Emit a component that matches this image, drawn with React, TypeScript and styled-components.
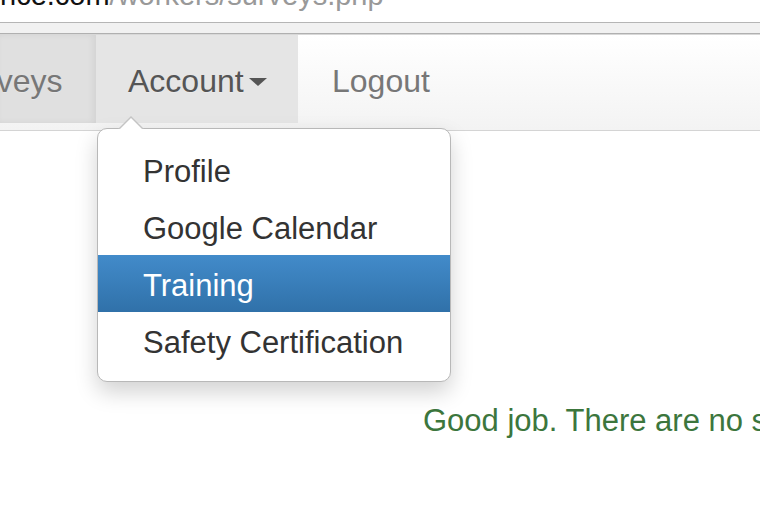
import React from "react";
import styled, { createGlobalStyle } from "styled-components";

const Global = createGlobalStyle`
  html, body {
    margin: 0;
    padding: 0;
    background: #fff;
    overflow: hidden;
  }
  body {
    font-family: "Liberation Sans", Arial, Helvetica, sans-serif;
  }
`;

const Page = styled.div`
  width: 760px;
  height: 514px;
  display: flex;
  flex-direction: column;
  overflow: hidden;
`;

const UrlBar = styled.div`
  height: 22px;
  overflow: hidden;
  border-bottom: 1px solid #b5b5b5;
  background: #fff;
`;

const UrlText = styled.div`
  font-size: 29px;
  line-height: 29px;
  margin-top: -19px;
  white-space: nowrap;
  color: #999;
  span {
    color: #111;
  }
`;

const ChromeStrip = styled.div`
  height: 10px;
  background: #f1f1f1;
  border-bottom: 1px solid #b0b0b0;
`;

const NavBar = styled.nav`
  position: relative;
  height: 95px;
  background: linear-gradient(to bottom, #ffffff 0%, #f3f3f3 100%);
  border-top: 1px solid #d8d8d8;
  border-bottom: 1px solid #d4d4d4;
  display: flex;
  align-items: flex-start;
`;

const NavItem = styled.div<{ $bg?: string; $color?: string; $w: number; $pad: number; $inset?: boolean }>`
  position: relative;
  width: ${(p) => p.$w}px;
  height: 88px;
  padding-top: 4px;
  background: ${(p) => p.$bg || "transparent"};
  box-shadow: ${(p) => (p.$inset ? "inset -3px 0 6px rgba(0,0,0,0.06)" : "none")};
  color: ${(p) => p.$color || "#777"};
  font-size: 32px;
  display: flex;
  align-items: center;
  padding-left: ${(p) => p.$pad}px;
  box-sizing: border-box;
  white-space: nowrap;
  overflow: hidden;
  text-shadow: 0 1px 0 rgba(255, 255, 255, 0.25);
`;

const Caret = styled.span`
  display: inline-block;
  width: 0;
  height: 0;
  margin-left: 5px;
  margin-top: 2px;
  border-top: 8px solid #555;
  border-left: 9px solid transparent;
  border-right: 9px solid transparent;
`;

const Dropdown = styled.div`
  position: absolute;
  left: 97px;
  top: 93px;
  width: 352px;
  padding: 12px 0;
  background: #fff;
  border: 1px solid #b8b8b8;
  border-radius: 10px;
  box-shadow: 0 10px 22px rgba(0, 0, 0, 0.18);
  z-index: 2;

  &::before,
  &::after {
    content: "";
    position: absolute;
    width: 0;
    height: 0;
    border-left: 13px solid transparent;
    border-right: 13px solid transparent;
  }
  &::before {
    left: 20px;
    top: -13px;
    border-bottom: 13px solid #c4c4c4;
  }
  &::after {
    left: 21px;
    top: -11px;
    border-left-width: 12px;
    border-right-width: 12px;
    border-bottom: 12px solid #fff;
  }
`;

const MenuItem = styled.div<{ $active?: boolean }>`
  height: 57px;
  padding-top: 4px;
  box-sizing: border-box;
  display: flex;
  align-items: center;
  padding-left: 45px;
  font-size: 31px;
  white-space: nowrap;
  color: ${(p) => (p.$active ? "#fff" : "#333")};
  background: ${(p) =>
    p.$active ? "linear-gradient(to bottom, #428bca 0%, #3071a9 100%)" : "transparent"};
`;

const Content = styled.div`
  flex: 1;
  padding: 272px 0 0 423px;
`;

const Success = styled.div`
  font-size: 31px;
  color: #3c763d;
  white-space: nowrap;
`;

export default function App() {
  const items = ["Profile", "Google Calendar", "Training", "Safety Certification"];
  return (
    <>
      <Global />
      <Page>
        <UrlBar>
          <UrlText>
            <span>nce.com</span>/workers/surveys.php
          </UrlText>
        </UrlBar>
        <ChromeStrip />
        <NavBar>
          <NavItem $w={96} $pad={0} $bg="#e0e0e0" $inset>
            <span style={{ marginLeft: -53 }}>Surveys</span>
          </NavItem>
          <NavItem $w={202} $pad={32} $bg="#e5e5e5" $color="#555">
            Account
            <Caret />
          </NavItem>
          <NavItem $w={200} $pad={34}>
            Logout
          </NavItem>
          <Dropdown>
            {items.map((it) => (
              <MenuItem key={it} $active={it === "Training"}>
                {it}
              </MenuItem>
            ))}
          </Dropdown>
        </NavBar>
        <Content>
          <Success>Good job. There are no surveys for you to complete.</Success>
        </Content>
      </Page>
    </>
  );
}
